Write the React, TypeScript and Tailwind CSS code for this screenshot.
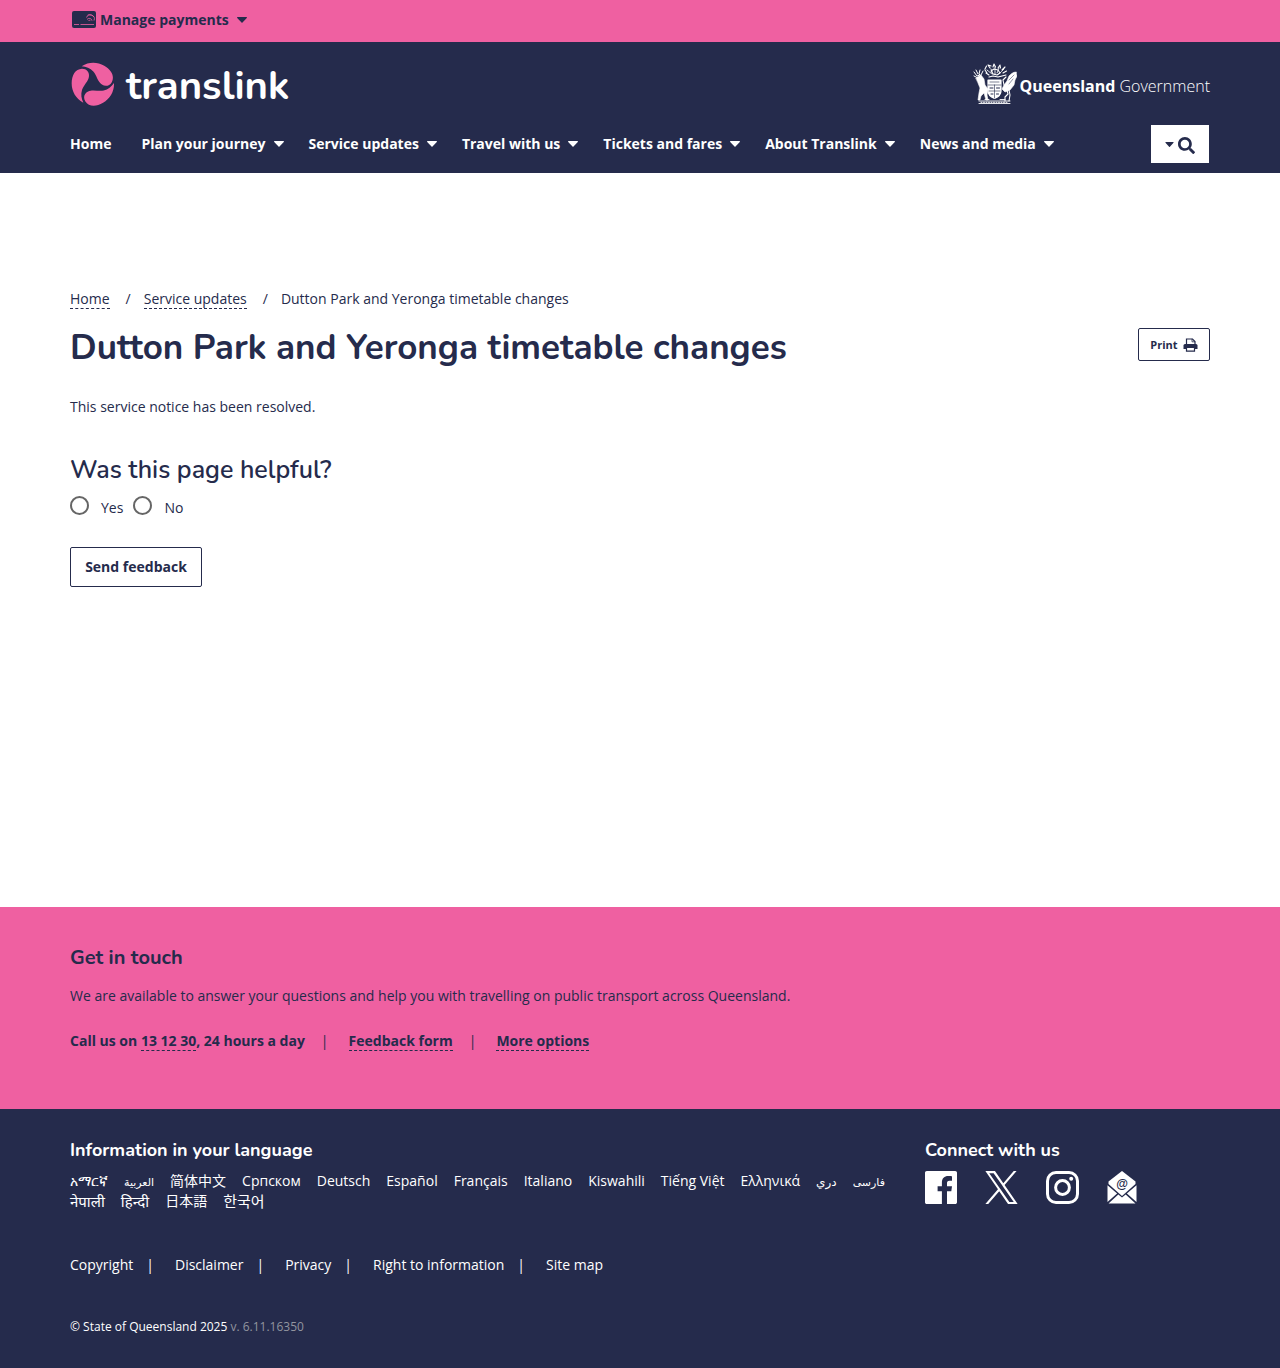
import React from "react";

const Caret = ({ small = false }: { small?: boolean }) => (
  <svg width={small ? 9 : 10} height={small ? 5 : 6} viewBox="0 0 10 6" fill="currentColor" aria-hidden="true">
    <path d="M.6 0h8.8c.5 0 .8.6.4 1L5.500 5.600a.7.7 0 0 1-1 0L.2 1C-.2.600.1 0 .6 0z" />
  </svg>
);

const blade = "M-29 56C-52 44-64 22-64-2C-64-27-53-45-33-46C-19-46-11-36-12-24C-13-8-28 3-33 18C-37 31-35 44-29 56z";

const nav: [string, boolean][] = [
  ["Home", false],
  ["Plan your journey", true],
  ["Service updates", true],
  ["Travel with us", true],
  ["Tickets and fares", true],
  ["About Translink", true],
  ["News and media", true],
];

const languages: [string, string, string][] = [
  ["አማርኛ", "am", ""],
  ["العربية", "ar", "text-[11px]"],
  ["简体中文", "zh", ""],
  ["Српском", "sr", ""],
  ["Deutsch", "de", ""],
  ["Español", "es", ""],
  ["Français", "fr", ""],
  ["Italiano", "it", ""],
  ["Kiswahili", "sw", ""],
  ["Tiếng Việt", "vi", ""],
  ["Ελληνικά", "el", ""],
  ["دري", "prs", "text-xs"],
  ["فارسی", "fa", "text-[11px]"],
  ["नेपाली", "ne", "text-[15px]"],
  ["हिन्दी", "hi", "text-[15px]"],
  ["日本語", "ja", ""],
  ["한국어", "ko", "text-[15px]"],
];

const legal = ["Copyright", "Disclaimer", "Privacy", "Right to information", "Site map"];

const wrap = "mx-auto w-full max-w-[1170px] px-[15px]";
const dashed = "border-b border-dashed border-[#252b4c]";

function CoatOfArms() {
  return (
    <svg width="44" height="42" viewBox="0 0 44 42" fill="none" stroke="#fff" strokeLinecap="round" strokeLinejoin="round" aria-hidden="true">
      {/* crest */}
      <path d="M12 6l1.500-3M14 10l-2-3M16 12l-3-2M17 5l-2-3 3 1M20 4l1-3 1.500 3M25 5l2-3 .5 3M29 7l3-3M30 10l3.500-2M29 13l4-1M18 8l3-2 4 1 2 3-3 2-4-1zM16 14l4-1 5 1 4-1" strokeWidth="1.100" />
      <path d="M18 6l2 5M26 5l-2 5M22 4v8M14 7l5 4M31 6l-5 5" strokeWidth=".9" strokeDasharray="1.200 .8" />
      {/* red deer */}
      <path d="M1 9l3 4 3-1M3 7l2 4M7 7l-1 4 2 2M10 8L8 12M1 13l4 2" strokeWidth="1" />
      <path d="M3 15l5-3 3 4 1 6 3 4-1 6 1 5h-2l-2-7-3 3-1 4H5l1-7 1-5-2-5z" fill="#fff" strokeWidth=".6" />
      {/* brolga */}
      <path d="M43 9c-3 0-5 2-7 4l-2 5-3 4-2 4 3 3 5-2 4-5 1-5 2-4z" fill="#fff" strokeWidth=".6" />
      <path d="M33 14l-3 3 1 5M34 27l1 4-3 3v4M36 27l1 5-1 6M41 14l-4 5M42 11l-5 4" strokeWidth="1.100" />
      <path d="M41 12l-5 5M40 16l-4 5" stroke="#252b4c" strokeWidth=".5" />
      {/* shield */}
      <path d="M15 17h13v11c0 4-3 6-6.500 7.500C18 34 15 32 15 28z" strokeWidth="1.200" fill="#fff" />
      <path d="M17 19h9M15 22h13M21.500 22v13M16 28h11" stroke="#252b4c" strokeWidth=".6" />
      <path d="M17 25h3M23.500 25h3M18 31h2M23.500 31h2" stroke="#252b4c" strokeWidth="1" />
      {/* scroll */}
      <path d="M6 38h31M6 40.500h31M12 36.500h4M27 36.500h5" strokeWidth=".9" />
      <path d="M8 39.300h27" strokeWidth="1" strokeDasharray="1 1.500" />
    </svg>
  );
}

function Facebook() {
  return (
    <svg width="32" height="33" viewBox="0 0 32 33" fill="#fff" aria-hidden="true">
      <path d="M1.800 0h28.400C31.200 0 32 .8 32 1.800v29.400c0 1-.8 1.800-1.800 1.800H22V20.200h4.300l.7-5h-5v-3.100c0-1.400.4-2.400 2.500-2.400H27V5.300c-.5 0-2-.2-3.800-.2-3.800 0-6.300 2.300-6.300 6.500v3.600h-4.300v5h4.300V33H1.800C.8 33 0 32.200 0 31.200V1.800C0 .8.8 0 1.800 0z" />
    </svg>
  );
}

function XLogo() {
  return (
    <svg width="33" height="33" viewBox="0 0 1200 1227" fill="#fff" aria-hidden="true">
      <path d="M714.163 519.284L1160.890 0H1055.030L667.137 450.887L357.328 0H0L468.492 681.821L0 1226.370H105.866L515.491 750.218L842.672 1226.370H1200L714.137 519.284H714.163ZM569.165 687.828L521.697 619.934L144.011 79.694H306.615L611.412 515.685L658.880 583.579L1055.080 1150.300H892.476L569.165 687.854V687.828Z" />
    </svg>
  );
}

function Instagram() {
  return (
    <svg width="33" height="33" viewBox="0 0 33 33" fill="none" stroke="#fff" strokeWidth="3" aria-hidden="true">
      <rect x="1.500" y="1.500" width="30" height="30" rx="8.500" />
      <circle cx="16.500" cy="16.500" r="6.900" />
      <circle cx="25.200" cy="7.800" r="2" fill="#fff" stroke="none" />
    </svg>
  );
}

function Mail() {
  return (
    <svg width="30" height="33" viewBox="0 0 29 33" aria-hidden="true">
      <path d="M14.500 0L28 10.500v2.500L14.500 25 1 13v-2.500z" fill="#fff" />
      <path d="M0 14.200l9.600 8.400L0 31zM29 14.200l-9.600 8.400L29 31zM1 32.500l9.800-9 3.700 3 3.700-3 9.800 9z" fill="#fff" />
      <text x="14.500" y="16.500" textAnchor="middle" fontSize="12" fontWeight="600" fill="#252b4c" fontFamily="Liberation Sans">@</text>
    </svg>
  );
}

export default function App() {
  return (
    <div className="bg-white font-['Open_Sans','Noto_Sans','DejaVu_Sans',sans-serif] text-sm text-[#252b4c]">
      <div className="bg-[#ef60a1]">
        <div className={wrap}>
          <button type="button" className="flex h-[42px] items-center pb-[3px] font-bold">
            <svg width="26" height="18" viewBox="0 0 26 18" className="mr-1" aria-hidden="true">
              <rect x="2" width="24" height="17" rx="2" fill="#252b4c" />
              <path d="M4 13.500h5M10.500 13.500h13.500" stroke="#ef60a1" strokeWidth=".8" />
              <path d="M16.500 6.500a4 4 0 0 1 7.500 3M17 8.500a2.800 2.800 0 0 1 5 1.200M18.500 9.500a1.200 1.200 0 0 1 1.800.5M17.500 4.300a5 5 0 0 1 6.700 1.900" stroke="#ef60a1" strokeWidth=".8" fill="none" />
            </svg>
            <span className="mr-2">Manage payments</span>
            <Caret />
          </button>
        </div>
      </div>

      <header className="bg-[#252b4c] text-white">
        <div className={wrap}>
          <div className="flex h-[83px] items-center justify-between">
            <a href="#" className="ml-px flex items-center" aria-label="translink">
              <svg width="44" height="44" viewBox="-66 -66 132 132" fill="#ef60a1" aria-hidden="true">
                <path d={blade} />
                <path d={blade} transform="rotate(120)" />
                <path d={blade} transform="rotate(240)" />
              </svg>
              <span className="mt-1 ml-[11px] font-['Nunito',sans-serif] text-[40px] leading-10 font-bold">translink</span>
            </a>
            <a href="#" className="flex items-center">
              <CoatOfArms />
              <span className="mt-1 ml-[3px] text-base">
                <span className="font-bold">Queensland</span> <span className="font-light">Government</span>
              </span>
            </a>
          </div>
          <div className="flex h-12 items-start justify-between">
            <nav className="flex h-[38px] items-center gap-[25px] font-bold">
              {nav.map(([label, menu]) => (
                <a key={label} href="#" className={menu ? "flex items-center gap-2" : "mr-[5px]"}>
                  {label}
                  {menu && <Caret />}
                </a>
              ))}
            </nav>
            <button type="button" aria-label="Search" className="mr-px flex h-[38px] w-[58px] items-center justify-center gap-1 bg-white text-[#252b4c]">
              <Caret small />
              <svg width="17" height="17" viewBox="0 0 512 512" fill="currentColor" className="mt-[3px]" aria-hidden="true">
                <path d="M505 442.700L405.300 343c-4.500-4.500-10.600-7-17-7H372c27.600-35.300 44-79.700 44-128C416 93.100 322.900 0 208 0S0 93.100 0 208s93.100 208 208 208c48.300 0 92.700-16.400 128-44v16.300c0 6.400 2.500 12.500 7 17l99.700 99.700c9.400 9.400 24.600 9.400 33.900 0l28.300-28.300c9.400-9.400 9.400-24.600.1-34zM208 336c-70.700 0-128-57.200-128-128 0-70.700 57.200-128 128-128 70.700 0 128 57.200 128 128 0 70.700-57.200 128-128 128z" />
              </svg>
            </button>
          </div>
        </div>
      </header>

      <main className={`${wrap} min-h-[734px] pt-[116px]`}>
        <nav aria-label="Breadcrumb" className="leading-5">
          <a href="#" className={dashed}>Home</a>
          <span className="mr-[13px] ml-4">/</span>
          <a href="#" className={dashed}>Service updates</a>
          <span className="mr-[13px] ml-4">/</span>
          <span>Dutton Park and Yeronga timetable changes</span>
        </nav>
        <div className="mt-[19px] flex items-start justify-between">
          <h1 className="font-['Nunito',sans-serif] text-[35px] leading-10 font-bold">Dutton Park and Yeronga timetable changes</h1>
          <button type="button" className="flex h-[33px] w-[72px] items-center justify-center gap-[5px] rounded-xs border border-[#252b4c] text-[11px] font-bold">
            Print
            <svg width="15" height="14" viewBox="0 0 15 14" aria-hidden="true" fill="currentColor">
              <path d="M3.500 7V1h6L12 3.500V7" fill="none" stroke="currentColor" strokeWidth="1.200" />
              <path d="M9 .8v3h3" fill="none" stroke="currentColor" strokeWidth=".8" />
              <path d="M2 6h11q1.500 0 1.500 1.500V11h-14V7.500Q.5 6 2 6z" />
              <path d="M3.500 9.500h8v3.700h-8z" fill="#fff" stroke="currentColor" strokeWidth="1.200" />
            </svg>
          </button>
        </div>
        <p className="mt-[29px] leading-5">This service notice has been resolved.</p>
        <form className="mt-[37px]">
          <fieldset>
            <legend className="font-['Nunito',sans-serif] text-[25px] leading-8 font-semibold">Was this page helpful?</legend>
            <div className="mt-2 flex items-center gap-2.5">
              {["Yes", "No"].map((label) => (
                <label key={label} className="flex items-start gap-3">
                  <input type="radio" name="helpful" className="mt-0.5 size-[19px] appearance-none rounded-full border-2 border-[#666] bg-white checked:bg-[#252b4c]" />
                  <span className="pt-1">{label}</span>
                </label>
              ))}
            </div>
          </fieldset>
          <button type="button" className="mt-[29px] h-10 w-[132px] rounded-xs border border-[#252b4c] font-bold">Send feedback</button>
        </form>
      </main>

      <section className="bg-[#ef60a1]">
        <div className={`${wrap} h-[202px] pt-[37px]`}>
          <h2 className="font-['Nunito',sans-serif] text-xl font-bold">Get in touch</h2>
          <p className="mt-3.5 leading-5">We are available to answer your questions and help you with travelling on public transport across Queensland.</p>
          <p className="mt-[25px] leading-5 font-bold">
            Call us on <a href="#" className={dashed}>13 12 30</a>, 24 hours a day
            <span className="mr-5 ml-4 font-normal">|</span>
            <a href="#" className={dashed}>Feedback form</a>
            <span className="mr-5 ml-4 font-normal">|</span>
            <a href="#" className={dashed}>More options</a>
          </p>
        </div>
      </section>

      <footer className="bg-[#252b4c] text-white">
        <div className={`${wrap} h-[259px] pt-[27px]`}>
          <div className="flex">
            <div className="w-3/4">
              <h2 className="font-['Nunito',sans-serif] text-lg font-bold">Information in your language</h2>
              <ul className="mt-[7px] flex flex-wrap gap-x-4 pr-5">
                {languages.map(([label, code, size]) => (
                  <li key={code} className="h-5 leading-5">
                    <a href="#" lang={code} className={`font-['Open_Sans','Noto_Sans','Noto_Sans_CJK_SC','DejaVu_Sans',sans-serif] ${size}`}>{label}</a>
                  </li>
                ))}
              </ul>
            </div>
            <div className="w-1/4">
              <h2 className="font-['Nunito',sans-serif] text-lg font-bold">Connect with us</h2>
              <div className="mt-[7px] flex gap-7">
                <a href="#" aria-label="Facebook"><Facebook /></a>
                <a href="#" aria-label="X"><XLogo /></a>
                <a href="#" aria-label="Instagram"><Instagram /></a>
                <a href="#" aria-label="Email"><Mail /></a>
              </div>
            </div>
          </div>
          <ul className="mt-[44px] flex leading-5">
            {legal.map((label, i) => (
              <li key={label}>
                <a href="#">{label}</a>
                {i < legal.length - 1 && <span className="mr-[21px] ml-[13px]">|</span>}
              </li>
            ))}
          </ul>
          <p className="mt-[42px] text-xs leading-5">© State of Queensland 2025 <span className="text-[#92959f]">v. 6.11.16350</span></p>
        </div>
      </footer>
    </div>
  );
}
